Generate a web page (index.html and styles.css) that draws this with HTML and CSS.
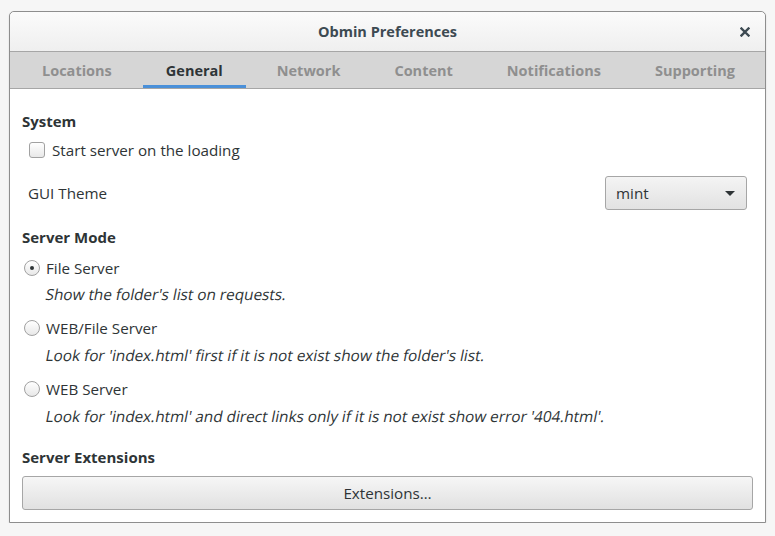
FILE: index.html
```html
<!DOCTYPE html>
<html>
<head>
<meta charset="utf-8">
<link rel="stylesheet" href="styles.css">
</head>
<body>
<div class="window">
  <div class="titlebar">
    <span class="title">Obmin Preferences</span>
    <span class="close">
      <svg width="10" height="10" viewBox="0 0 10 10"><path d="M1.5 1.5 L8.5 8.5 M8.5 1.5 L1.5 8.5" stroke="#3d4a52" stroke-width="2.4" stroke-linecap="square"/></svg>
    </span>
  </div>
  <div class="tabs">
    <div class="tab">Locations</div>
    <div class="tab active">General</div>
    <div class="tab">Network</div>
    <div class="tab">Content</div>
    <div class="tab">Notifications</div>
    <div class="tab">Supporting</div>
  </div>
  <div class="content">
    <div class="heading">System</div>
    <label class="check-row"><span class="checkbox"></span>Start server on the loading</label>
    <div class="theme-row">
      <span class="theme-label">GUI Theme</span>
      <div class="combo"><span>mint</span><span class="arrow"></span></div>
    </div>
    <div class="heading mode">Server Mode</div>
    <div class="radio-row first"><span class="radio checked"></span>File Server</div>
    <div class="desc"><span class="oblique">Show the folder's list on requests.</span></div>
    <div class="radio-row"><span class="radio"></span>WEB/File Server</div>
    <div class="desc later"><span class="oblique">Look for 'index.html' first if it is not exist show the folder's list.</span></div>
    <div class="radio-row"><span class="radio"></span>WEB Server</div>
    <div class="desc later"><span class="oblique">Look for 'index.html' and direct links only if it is not exist show error '404.html'.</span></div>
    <div class="heading ext">Server Extensions</div>
    <div class="button">Extensions…</div>
  </div>
</div>
</body>
</html>
```
FILE: styles.css
```css
html, body {
  margin: 0;
  padding: 0;
  background: #f6f6f6;
  font-family: "Open Sans", "Noto Sans", sans-serif;
  font-size: 15.2px;
  color: #2e3436;
}
.window {
  margin: 11px 0 0 9px;
  width: 755px;
  border: 1px solid #8e8e8e;
  border-radius: 5px 5px 0 0;
  background: #fff;
  box-shadow: 0 1px 2px rgba(0,0,0,0.12);
}
.titlebar {
  height: 39px;
  border-bottom: 1px solid #a6a6a6;
  background: linear-gradient(#fbfbfb, #efefef);
  border-radius: 5px 5px 0 0;
  display: flex;
  align-items: center;
  justify-content: center;
  position: relative;
}
.title {
  font-weight: bold;
  color: #3d4a52;
  font-size: 14.5px;
}
.close {
  position: absolute;
  right: 15px;
  top: 15px;
  line-height: 0;
}
.tabs {
  height: 36px;
  background: #d6d6d6;
  border-bottom: 1px solid #a6a6a6;
  display: flex;
  padding-left: 9px;
  gap: 8px;
  font-size: 14.5px;
}
.tab {
  padding: 0 23px;
  display: flex;
  align-items: center;
  color: #8f8f8f;
  font-weight: bold;
  border-bottom: 3px solid transparent;
  padding-top: 3px;
}
.tab.active {
  color: #2e3436;
  border-bottom-color: #4a90d9;
}
.content {
  padding: 22px 12px 12px 12px;
}
.heading {
  font-weight: bold;
  line-height: 20px;
  font-size: 15px;
}
.check-row {
  display: flex;
  align-items: center;
  margin: 9px 0 0 7px;
  line-height: 20px;
}
.checkbox {
  width: 14px;
  height: 14px;
  border: 1px solid #a1a1a1;
  border-radius: 3px;
  background: linear-gradient(#fff, #e8e8e8);
  margin-right: 7px;
}
.theme-row {
  display: flex;
  align-items: center;
  justify-content: space-between;
  margin: 16px 6px 0 6px;
}
.combo {
  width: 142px;
  height: 34px;
  box-sizing: border-box;
  border: 1px solid #a6a6a6;
  border-radius: 3px;
  background: linear-gradient(#f4f4f4, #e2e2e2);
  display: flex;
  align-items: center;
  justify-content: space-between;
  padding: 0 11px 0 10px;
}
.arrow {
  width: 0;
  height: 0;
  border-left: 5px solid transparent;
  border-right: 5px solid transparent;
  border-top: 5px solid #2e3436;
}
.heading.mode {
  margin-top: 17px;
}
.radio-row {
  display: flex;
  align-items: center;
  margin: 14px 0 0 2px;
  line-height: 20px;
}
.radio-row.first {
  margin-top: 11px;
}
.radio {
  width: 14px;
  height: 14px;
  border: 1px solid #a1a1a1;
  border-radius: 50%;
  background: linear-gradient(#fff, #e8e8e8);
  margin-right: 6px;
  display: flex;
  align-items: center;
  justify-content: center;
}
.radio.checked::after {
  content: "";
  width: 4px;
  height: 4px;
  border-radius: 50%;
  background: #2e3436;
}
.desc {
  margin: 6px 0 0 24px;
  line-height: 20px;
}
.desc.later {
  margin-top: 7px;
}
.oblique {
  display: inline-block;
  transform: skewX(-11deg);
  font-size: 15.3px;
}
.heading.ext {
  margin-top: 21px;
}
.button {
  margin-top: 9px;
  height: 34px;
  box-sizing: border-box;
  border: 1px solid #a6a6a6;
  border-radius: 3px;
  background: linear-gradient(#f6f6f6, #e1e1e1);
  display: flex;
  align-items: center;
  justify-content: center;
}
```
